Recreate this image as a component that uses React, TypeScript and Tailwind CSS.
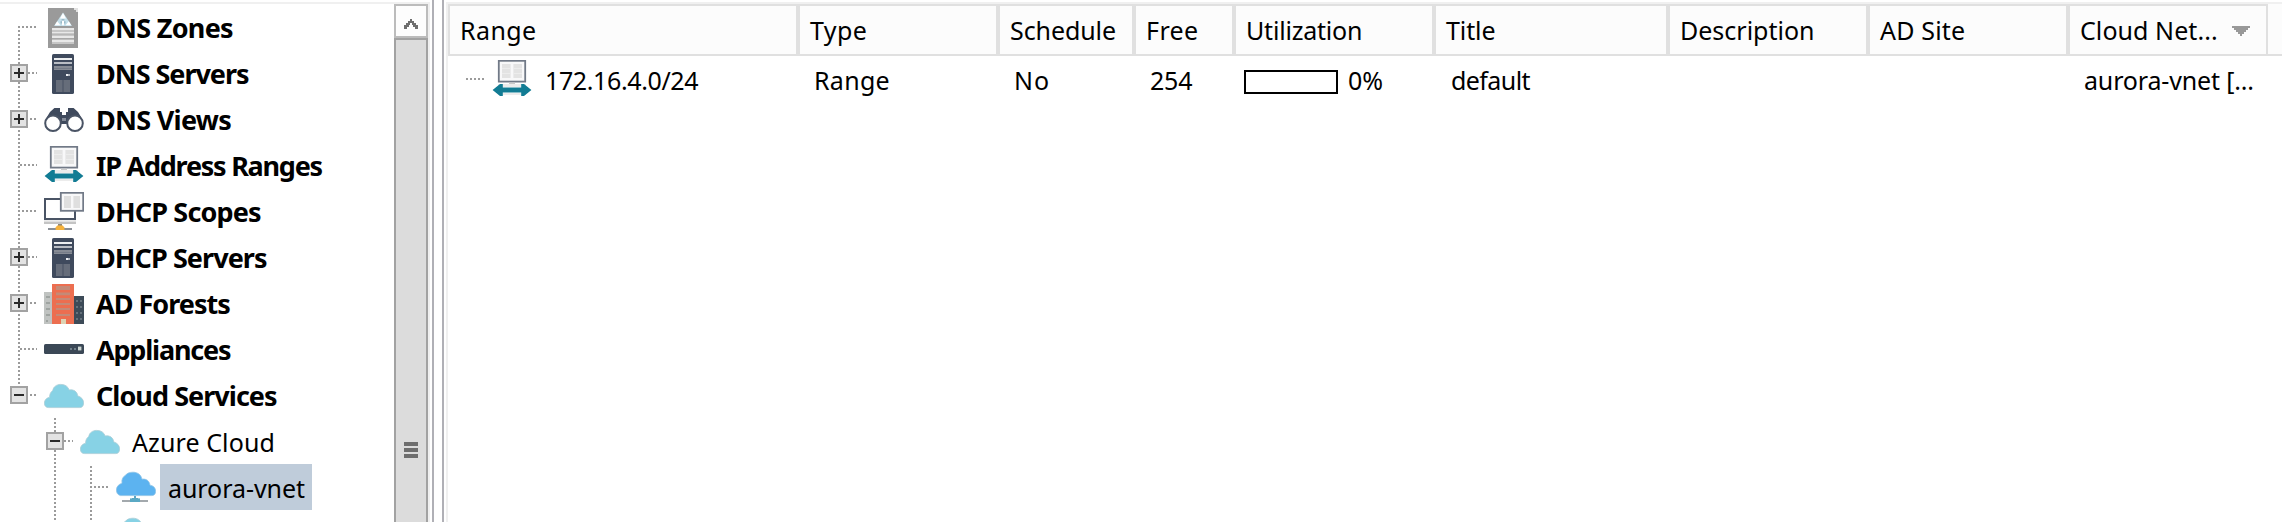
import React from "react";

type IconProps = { children: React.ReactNode };

function Icon({ children }: IconProps) {
  return (
    <svg viewBox="0 0 20 20" className="size-10 shrink-0">
      {children}
    </svg>
  );
}

function ZonesIcon() {
  return (
    <Icon>
      <path d="M2 0H15.5V.5H16V1H16.5V2H17V20H2Z" fill="#9a9a9a" />
      <path d="M15 0H17V2H16V1H15Z" fill="#e2e2e2" />
      <path d="M9.5 2.3 14 9H5Z" fill="#c4dfea" />
      <path d="M9.5 2.5 11 5.2H8ZM6.6 6.6 8.2 8.6H5.4ZM12.4 6.6 13.6 8.6H10.8ZM9 6.2H10V8.6H9Z" fill="#fff" />
      <path d="M8.8 5.6h1.4v.7H8.8ZM8.3 6.6h.6v1.2h-.6ZM10.1 6.6h.6v1.2h-.6Z" fill="#8fb0be" />
      <path d="M4 10H15V11H4ZM4 12H15V13H4ZM4 14H15V15H4ZM4 16H15V17H4Z" fill="#e8e8e8" />
      <path d="M4 11H15V12H4ZM4 13H15V14H4ZM4 15H15V16H4ZM4 17H15V18H4Z" fill="#c6c6c6" />
      <path d="M4 15H15V15.6H4ZM4 12.7H15V13.2H4Z" fill="#a8a8a8" />
    </Icon>
  );
}

function ServerIcon() {
  return (
    <Icon>
      <rect x="4" width="11" height="20" rx=".8" fill="#3f4a5d" />
      <path d="M5 2H14V3H5Z" fill="#eceef0" />
      <path d="M5 4H14V5H5Z" fill="#b9bdc4" />
      <path d="M5 6H14V8H5Z" fill="#878c95" />
      <path d="M5 7H14V7.3H5Z" fill="#6b7280" />
      <path d="M11 10H13V11H11Z" fill="#b4bac3" />
      <path d="M11 10H12V11H11Z" fill="#f2f4f6" />
      <path d="M6 13H13V19H6Z" fill="#666d7a" />
      <path d="M9.2 13H9.8V19H9.2Z" fill="#4c5566" />
    </Icon>
  );
}

function BinocularsIcon() {
  return (
    <Icon>
      <path d="M3 6 5.2 4H8V6H9V7.5H11V6H12V4H14.8L17 6 18.6 8.6 14 8 11.6 12H8.4L6 8 1.4 8.6Z" fill="#3f4a5d" />
      <path d="M9 9H11V10.5H9Z" fill="#858c99" />
      <circle cx="4.5" cy="11.6" r="3.9" fill="#fff" stroke="#4a5465" />
      <circle cx="15.5" cy="11.6" r="3.9" fill="#fff" stroke="#4a5465" />
    </Icon>
  );
}

function RangeIcon() {
  return (
    <Icon>
      <rect x="3.4" y=".4" width="13.2" height="10.4" fill="#f8f8f9" stroke="#717987" strokeWidth=".9" />
      <path d="M5 2H9.3V9H5ZM10.7 2H15V9H10.7Z" fill="#e3e3e3" />
      <path d="M5 4H9.3V4.5H5ZM10.7 4H15V4.5H10.7ZM5 6.5H9.3V7H5ZM10.7 6.5H15V7H10.7Z" fill="#ececec" />
      <path d="M8.5 11.3H11.5V12.2H8.5Z" fill="#c9c9c9" />
      <path d="M3 12H17V13.5H3ZM3 16.5H17V17.5H3Z" fill="#ececec" />
      <path d="M.3 15 4 12H5.4V13.8H14.6V12H16L19.7 15 16 18H14.6V16.2H5.4V18H4Z" fill="#127c94" />
    </Icon>
  );
}

function ScopesIcon() {
  return (
    <Icon>
      <rect x=".5" y="3.5" width="15" height="10" fill="#fff" stroke="#4a5465" />
      <path d="M0 14H16V14.8H0Z" fill="#ececec" />
      <path d="M0 14.8H16V16H0Z" fill="#c4c4c4" />
      <rect x="8.4" y=".4" width="11.2" height="9" fill="#f8f8f9" stroke="#717987" strokeWidth=".9" />
      <path d="M10 2H13.5V8H10ZM14.7 2H18V8H14.7Z" fill="#dfdfdf" />
      <path d="M2 18H14V19H2Z" fill="#8a8f96" />
      <path d="M7 16H9V17H7Z" fill="#8f8878" />
      <path d="M6.6 16.8H9.4L10.2 17.8V19H5.8V17.8Z" fill="#f6b23c" />
    </Icon>
  );
}

function ForestIcon() {
  return (
    <Icon>
      <path d="M0 4H4V20H0Z" fill="#c0c3c1" />
      <path d="M1 6H3V7H1ZM1 9H3V10H1ZM1 12H3V13H1ZM1 15H3V16H1ZM1 18H2V19H1Z" fill="#9fa4a1" />
      <path d="M15 6H20V20H15Z" fill="#3d4b58" />
      <path d="M16 8H17V9H16ZM18 8H19V9H18ZM16 11H17V12H16ZM18 11H19V12H18ZM16 14H17V15H16ZM18 14H19V15H18ZM16 17H17V18H16ZM18 17H19V18H18Z" fill="#66727c" />
      <path d="M4 0H15V20H4Z" fill="#ec6e50" />
      <path d="M6 1H13V3H6ZM6 4.2H13V5.6H6ZM6 7H13V8H6ZM6 9.5H13V10.5H6ZM6 12H13V13H6ZM6 15H13V16H6Z" fill="#c48a77" />
      <path d="M8.5 17.5H11V20H8.5Z" fill="#ddd3b4" />
    </Icon>
  );
}

function ApplianceIcon() {
  return (
    <Icon>
      <rect y="7" width="20" height="5" rx=".8" fill="#3b4856" />
      <path d="M13 9H14V10H13ZM15 9H16V10H15Z" fill="#71808a" />
      <path d="M17 8.3H18.7V10.2H17Z" fill="#cdd6d2" />
    </Icon>
  );
}

function CloudIcon() {
  return (
    <Icon>
      <path
        d="M2.3 15.8C.9 15.8.2 14.8.2 13.6C.2 12 1.2 11 2.8 10.6C2.8 9 3.4 7.9 4.4 7.2C4.7 5.4 6.2 4.2 8.4 4.2C10.6 4.2 12 5.2 12.6 7C14.6 6.6 16.6 7.6 16.9 10C18.6 10.4 19.8 11.8 19.8 13.4C19.8 14.9 19.2 15.8 17.8 15.8Z"
        fill="#87d2e5"
        stroke="#a9cdd6"
        strokeWidth=".4"
      />
    </Icon>
  );
}

function VnetIcon({ tone }: { tone: "blue" | "cyan" }) {
  return (
    <Icon>
      <path
        d="M2.2 13.8C.8 13.4.2 12.3.2 11C.2 9.3 1.3 8.2 3 7.6C2.7 5.8 3.4 4.4 4.6 3.8C5.4 2.6 6.8 2.1 8.4 2.1C10.8 2.1 12.6 3.4 13 5.6C15.2 5.2 16.8 6.6 17 8.6C18.8 8.8 19.8 10 19.8 11.6C19.8 12.9 19.2 13.8 17.8 13.8Z"
        fill={tone === "blue" ? "#5cb3f0" : "#87d2e5"}
        stroke={tone === "blue" ? "#8fc4e6" : "#a9cdd6"}
        strokeWidth=".4"
      />
      <path d="M9 14H10V15H11V16H8V15H9Z" fill="#5aa5c4" />
      <path d="M3 16H16V17H3Z" fill="#a3a9ad" />
      <path d="M7 15.2H12V17H7Z" fill="#5aa9c4" />
    </Icon>
  );
}

type Guide = "start" | "through" | "end";

type TreeRowProps = {
  icon: React.ReactNode;
  label: string;
  textClass: string;
  depth: number;
  odd: boolean;
  guide: Guide;
  parentGuide?: boolean;
  expander?: "plus" | "minus";
  selected?: boolean;
};

function TreeRow({ icon, label, textClass, depth, odd, guide, parentGuide, expander, selected }: TreeRowProps) {
  const width = 44 + depth * 36;
  const x = 19 + depth * 36;
  const first = odd ? 0 : 2;
  const hStart = expander ? (odd ? x + 9 : x + 11) : odd ? x + 1 : x - 1;
  return (
    <div className="flex h-[46px] shrink-0">
      <svg width={width} height="46" className="shrink-0" shapeRendering="crispEdges">
        <g stroke="#9b9b9b" strokeWidth="2" strokeDasharray="2 2">
          {parentGuide && <line x1={x - 36} x2={x - 36} y1={first} y2="46" />}
          <line x1={x} x2={x} y1={guide === "start" ? 22 : first} y2={guide === "end" ? 22 : 46} />
          <line x1={hStart} x2={x + 18} y1="23" y2="23" />
        </g>
        {expander && (
          <g>
            <rect x={x - 8} y="15" width="16" height="16" fill="#e3e3e3" stroke="#a2a2a2" strokeWidth="2" />
            <rect x={x - 5} y="22" width="10" height="2" fill="#2a2a2a" />
            {expander === "plus" && <rect x={x - 1} y="18" width="2" height="10" fill="#2a2a2a" />}
          </g>
        )}
      </svg>
      <div className="mt-1">{icon}</div>
      <div className={`ml-1 flex items-center whitespace-pre ${selected ? "w-[152px] bg-[#bfccda]" : ""} ${textClass}`}>
        {label}
      </div>
    </div>
  );
}

const bold = "text-[27px] font-bold";

function Tree() {
  return (
    <div className="flex h-[518px] w-[394px] flex-col overflow-hidden bg-white">
      <TreeRow icon={<ZonesIcon />} label="DNS Zones" depth={0} odd={false} guide="start" textClass={`${bold} pl-[8px] tracking-[-0.72px]`} />
      <TreeRow icon={<ServerIcon />} label="DNS Servers" depth={0} odd guide="through" expander="plus" textClass={`${bold} pl-[8px] tracking-[-1.03px]`} />
      <TreeRow icon={<BinocularsIcon />} label="DNS Views" depth={0} odd={false} guide="through" expander="plus" textClass={`${bold} pl-[8px] tracking-[-0.72px]`} />
      <TreeRow icon={<RangeIcon />} label="IP Address Ranges" depth={0} odd guide="through" textClass={`${bold} pl-[8px] tracking-[-1.25px]`} />
      <TreeRow icon={<ScopesIcon />} label="DHCP Scopes" depth={0} odd={false} guide="through" textClass={`${bold} pl-[8px] tracking-[-0.84px]`} />
      <TreeRow icon={<ServerIcon />} label="DHCP Servers" depth={0} odd guide="through" expander="plus" textClass={`${bold} pl-[8px] tracking-[-0.93px]`} />
      <TreeRow icon={<ForestIcon />} label="AD Forests" depth={0} odd={false} guide="through" expander="plus" textClass={`${bold} pl-[8px] tracking-[-0.98px]`} />
      <TreeRow icon={<ApplianceIcon />} label="Appliances" depth={0} odd guide="through" textClass={`${bold} pl-[8px] tracking-[-1.2px]`} />
      <TreeRow icon={<CloudIcon />} label="Cloud Services" depth={0} odd={false} guide="end" expander="minus" textClass={`${bold} pl-[8px] tracking-[-0.96px]`} />
      <TreeRow icon={<CloudIcon />} label="Azure Cloud" depth={1} odd guide="through" expander="minus" textClass="pt-[2px] pl-[8px] tracking-[0.1px]" />
      <TreeRow icon={<VnetIcon tone="blue" />} label="aurora-vnet" depth={2} odd={false} guide="through" parentGuide selected textClass="pt-[2px] pl-[8px] tracking-[-0.06px]" />
      <TreeRow icon={<VnetIcon tone="cyan" />} label="" depth={2} odd guide="through" parentGuide textClass="" />
    </div>
  );
}

function Scrollbar() {
  return (
    <div className="flex h-[518px] w-[34px] flex-col">
      <div className="flex h-[34px] shrink-0 items-center justify-center border-2 border-b-0 border-[#bcbcbc] bg-[#fdfdfd]">
        <svg width="14" height="10" className="mt-1">
          <path d="M0 10V6H2V4H4V2H6V0H8V2H10V4H12V6H14V10H11V8H9V6H8V4H6V6H5V8H3V10Z" fill="#6e6e6e" />
        </svg>
      </div>
      <div className="flex grow flex-col items-center border-2 border-b-0 border-[#a2a2a2] bg-[#dcdcdc] shadow-[0_-2px_0_#bcbcbc]">
        <div className="mt-[402px] flex flex-col gap-[2px]">
          <div className="h-1 w-[14px] bg-[#6e6e6e]" />
          <div className="h-1 w-[14px] bg-[#6e6e6e]" />
          <div className="h-1 w-[14px] bg-[#6e6e6e]" />
        </div>
      </div>
    </div>
  );
}

const columns = [
  { label: "Range", cls: "w-[350px] pl-[10px] tracking-[0.4px]" },
  { label: "Type", cls: "w-[200px] pl-[10px] tracking-[0.4px]" },
  { label: "Schedule", cls: "w-[136px] pl-[10px] tracking-[-0.08px]" },
  { label: "Free", cls: "w-[100px] pl-[10px] tracking-[0.4px]" },
  { label: "Utilization", cls: "w-[200px] pl-[10px] tracking-[-0.2px]" },
  { label: "Title", cls: "w-[234px] pl-[10px] tracking-[-0.1px]" },
  { label: "Description", cls: "w-[200px] pl-[10px]" },
  { label: "AD Site", cls: "w-[200px] pl-[10px] tracking-[0.18px]" },
  { label: "Cloud Net...", cls: "w-[200px] pl-[10px] tracking-[0.07px]", sorted: true },
];

function Grid() {
  return (
    <div className="flex w-[1836px] flex-col border-l-2 border-t-2 border-[#f0f0f0] bg-white">
      <div className="flex h-[52px] w-full bg-[#fcfcfc]">
        {columns.map((c) => (
          <div key={c.label} className={`flex shrink-0 items-center justify-between whitespace-pre border-2 border-[#e0e0e0] ${c.cls}`}>
            <span>{c.label}</span>
            {c.sorted && (
              <svg width="18" height="10" className="mr-4 mt-[2px]" shapeRendering="crispEdges">
                <path d="M0 0H18V2H16V4H14V6H12V8H10V10H8V8H6V6H4V4H2V2H0Z" fill="#999999" />
              </svg>
            )}
          </div>
        ))}
        <div className="grow border-b-2 border-[#e0e0e0]" />
      </div>
      <div className="flex h-[46px] whitespace-pre">
        <div className="flex w-[350px]">
          <svg width="44" height="46" className="shrink-0" shapeRendering="crispEdges">
            <line x1="18" x2="36" y1="23" y2="23" stroke="#9b9b9b" strokeWidth="2" strokeDasharray="2 2" />
          </svg>
          <div className="mt-1"><RangeIcon /></div>
          <div className="flex items-center pl-[13px] pt-[2px] tracking-[-0.38px]">172.16.4.0/24</div>
        </div>
        <div className="flex w-[200px] items-center pl-4 pt-[2px] tracking-[0.3px]">Range</div>
        <div className="flex w-[136px] items-center pl-4 pt-[2px] tracking-[1px]">No</div>
        <div className="flex w-[100px] items-center pl-4 pt-[2px] tracking-[-0.2px]">254</div>
        <div className="flex w-[200px] items-center pl-[10px]">
          <div className="mt-[6px] h-6 w-[94px] border-2 border-black bg-white" />
          <div className="pl-[10px] pt-[2px]">0%</div>
        </div>
        <div className="flex w-[234px] items-center pl-[17px] pt-[2px] tracking-[-0.58px]">default</div>
        <div className="w-[200px]" />
        <div className="w-[200px]" />
        <div className="flex w-[200px] items-center pl-4 pt-[2px] tracking-[-0.16px]">aurora-vnet [...</div>
      </div>
    </div>
  );
}

export default function App() {
  return (
    <div className="flex h-[522px] w-[2282px] flex-col overflow-hidden bg-white pt-[2px] font-['Noto_Sans',sans-serif] text-[25px] leading-none text-black">
      <div className="flex h-[520px]">
        <div className="flex w-[430px] border-r-2 border-t-2 border-[#f0f0f0]">
          <Tree />
          <Scrollbar />
        </div>
        <div className="-mt-[2px] ml-[2px] w-[12px] border-x-2 border-[#b0b0b6] bg-white" />
        <div className="w-[2px]" />
        <Grid />
      </div>
    </div>
  );
}
